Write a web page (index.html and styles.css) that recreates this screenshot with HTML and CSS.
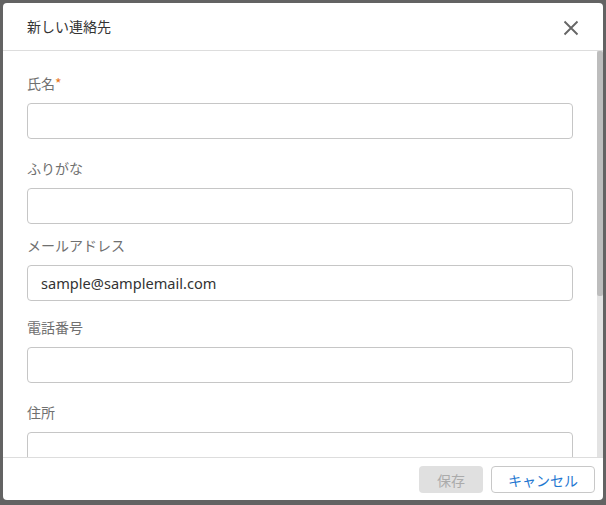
FILE: index.html
```html
<!DOCTYPE html>
<html lang="ja">
<head>
<meta charset="utf-8">
<title>新しい連絡先</title>
<link rel="stylesheet" href="styles.css">
</head>
<body>
<div class="overlay">
  <div class="dialog">
    <div class="dialog-header">
      <span class="dialog-title">新しい連絡先</span>
      <button class="close" aria-label="閉じる">
        <svg width="16" height="16" viewBox="0 0 16 16"><path d="M1.5 1.5 L14.5 14.5 M14.5 1.5 L1.5 14.5" stroke="#666" stroke-width="1.9" fill="none"/></svg>
      </button>
    </div>
    <div class="dialog-main">
      <div class="dialog-body">
        <div class="field field-a">
          <label class="label">氏名<span class="req">*</span></label>
          <input class="input" type="text">
        </div>
        <div class="field field-b">
          <label class="label">ふりがな</label>
          <input class="input" type="text">
        </div>
        <div class="field field-c">
          <label class="label">メールアドレス</label>
          <input class="input" type="text" value="sample@samplemail.com">
        </div>
        <div class="field field-d">
          <label class="label">電話番号</label>
          <input class="input" type="text">
        </div>
        <div class="field field-a">
          <label class="label">住所</label>
          <input class="input" type="text">
        </div>
      </div>
      <div class="scrollbar"><div class="thumb"></div></div>
    </div>
    <div class="dialog-footer">
      <button class="btn btn-save" disabled>保存</button>
      <button class="btn btn-cancel">キャンセル</button>
    </div>
  </div>
</div>
</body>
</html>
```
FILE: styles.css
```css
html, body {
  margin: 0;
  padding: 0;
  height: 100%;
}
body {
  background: #636363;
  font-family: "Noto Sans CJK JP", "Noto Sans", sans-serif;
  font-size: 14px;
}
.overlay {
  height: 100%;
  box-sizing: border-box;
  padding: 3px 3px 5px 3px;
  display: flex;
}
.dialog {
  flex: 1;
  background: #fff;
  border-radius: 4px;
  display: flex;
  flex-direction: column;
  overflow: hidden;
}
.dialog-header {
  height: 47px;
  border-bottom: 1px solid #dddddd;
  display: flex;
  align-items: center;
  justify-content: space-between;
  padding: 0 24px;
  flex: none;
}
.dialog-title {
  color: #333;
  font-size: 14px;
  line-height: 20px;
  margin-top: -2px;
}
.close {
  border: 0;
  background: none;
  padding: 0;
  width: 16px;
  height: 16px;
  display: flex;
  margin-top: 2px;
}
.dialog-main {
  flex: 1;
  min-height: 0;
  display: flex;
}
.dialog-body {
  flex: 1;
  overflow: hidden;
  padding: 22px 24px 0 24px;
}
.scrollbar {
  width: 6px;
  flex: none;
  background: #e3e3e3;
}
.thumb {
  height: 245px;
  background: #bdbdbd;
  border-radius: 2px;
}
.field {
  display: flex;
  flex-direction: column;
}
.field-a { margin-bottom: 19px; }
.field-b { margin-bottom: 11px; }
.field-c { margin-bottom: 16px; }
.field-d { margin-bottom: 19px; }
.label {
  color: #707070;
  line-height: 20px;
  margin-bottom: 10px;
}
.req {
  color: #e8761c;
}
.input {
  height: 36px;
  box-sizing: border-box;
  border: 1px solid #c6c6c6;
  border-radius: 4px;
  padding: 0 13px;
  font-family: "Noto Sans", "Noto Sans CJK JP", sans-serif;
  font-size: 14.6px;
  color: #333;
  outline: none;
}
.dialog-footer {
  height: 42px;
  border-top: 1px solid #dddddd;
  display: flex;
  align-items: center;
  justify-content: flex-end;
  gap: 8px;
  padding: 0 8px;
  flex: none;
}
.btn {
  height: 27px;
  border-radius: 4px;
  font-family: "Noto Sans CJK JP", sans-serif;
  font-size: 14px;
  padding: 0;
  margin-top: 1px;
}
.btn-save {
  width: 64px;
  background: #e0e0e0;
  border: 0;
  color: #ababab;
}
.btn-cancel {
  width: 104px;
  background: #fff;
  border: 1px solid #c8c8c8;
  color: #1f78d1;
}
```
